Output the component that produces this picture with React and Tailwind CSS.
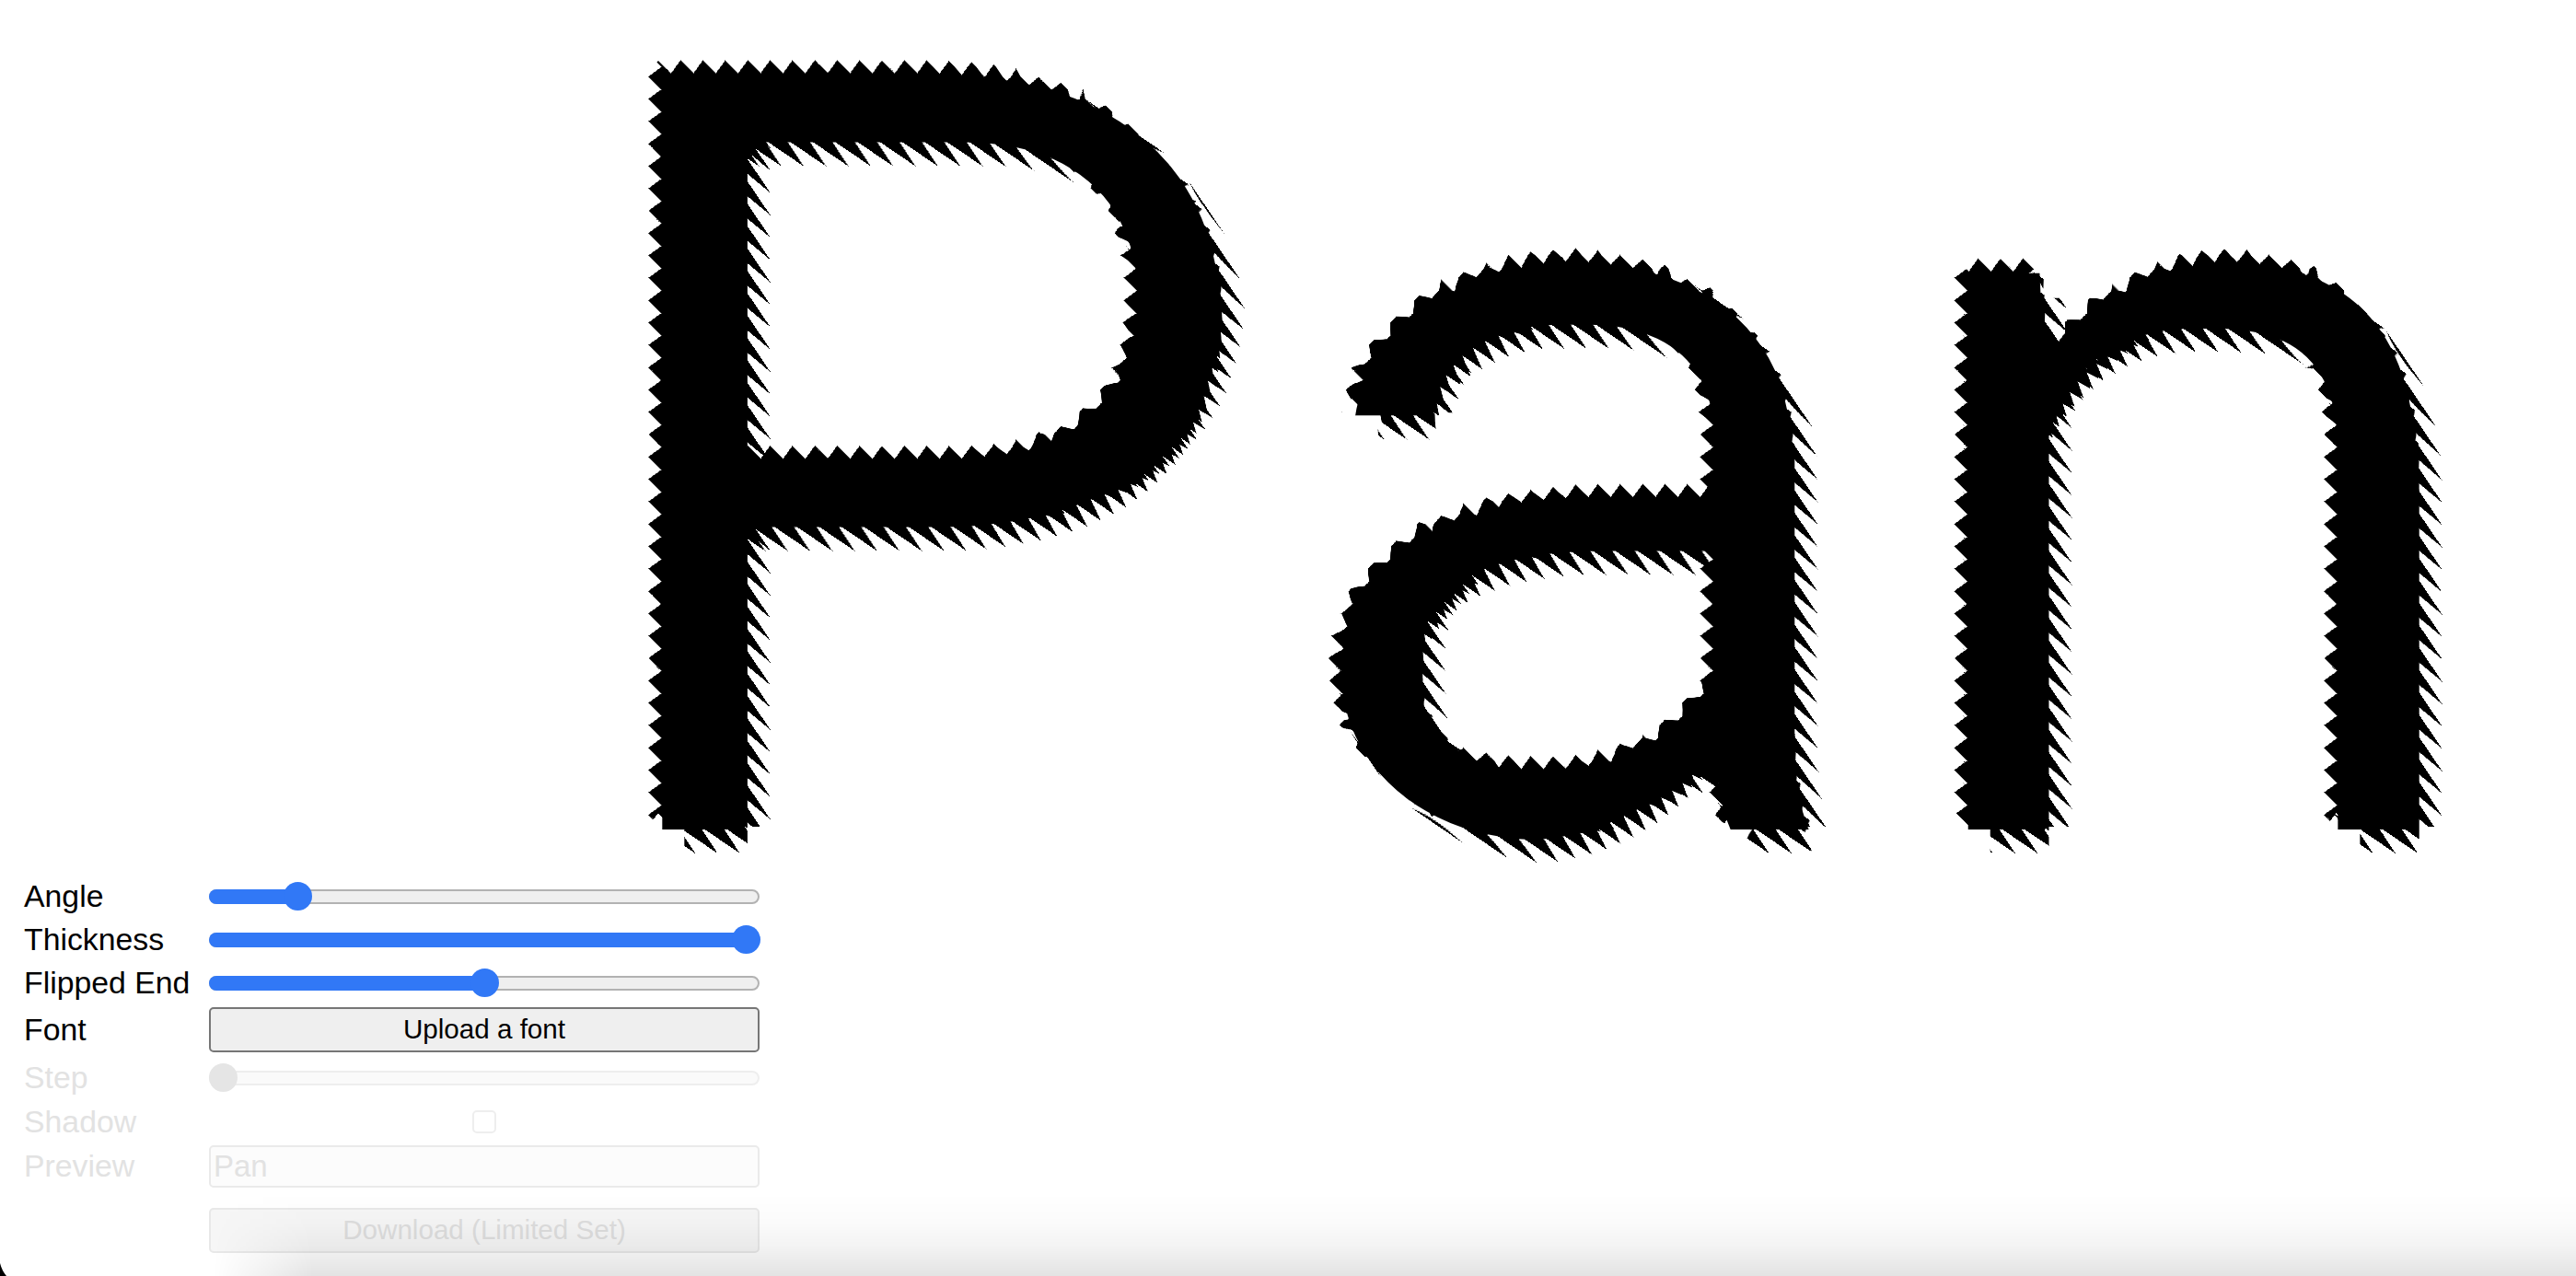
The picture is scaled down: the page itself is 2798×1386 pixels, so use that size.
import React from "react"

const font = { fontFamily: '"Liberation Sans", Arial, sans-serif' }
const wordFont = { fontFamily: 'Roboto, "Liberation Sans", sans-serif' }

// repeating ramps used as displacement maps for the serrated lettering
const gradientMap = (channel, x2, y2, stops) => {
  const stopTags = stops
    .map(([at, v]) => {
      const c = Math.round(v * 255)
      const color = channel === "r" ? `rgb(${c},0,0)` : `rgb(0,${c},0)`
      return `<stop offset='${at}' stop-color='${color}'/>`
    })
    .join("")
  const svg = `<svg xmlns='http://www.w3.org/2000/svg' width='2798' height='1000'><defs><linearGradient id='g' gradientUnits='userSpaceOnUse' spreadMethod='repeat' x1='0' y1='0' x2='${x2}' y2='${y2}'>${stopTags}</linearGradient></defs><rect width='2798' height='1000' fill='url(#g)'/></svg>`
  return `data:image/svg+xml,${encodeURIComponent(svg)}`
}

const ramp = [[0, 0], [1, 1]]
const wave = [[0, 0], [0.42, 1], [1, 0]]
const flat = [[0, 0.5], [1, 0.5]]
const period = 24.3
const lean = 1.47
const leanVec = (a, b) => [(period * a) / (a * a + b * b), (period * b) / (a * a + b * b)]
const [rx, ry] = leanVec(-lean, 1)
const [gx, gy] = leanVec(1, -lean)

function ToothMap({ name, red, green }) {
  return (
    <>
      <feImage href={red} x="0" y="0" width="2798" height="1000" preserveAspectRatio="none" result={`${name}R`} />
      <feImage href={green} x="0" y="0" width="2798" height="1000" preserveAspectRatio="none" result={`${name}G`} />
      <feBlend in={`${name}R`} in2={`${name}G`} mode="screen" result={name} />
    </>
  )
}

function Preview() {
  return (
    <svg className="block w-full h-[950px]" viewBox="0 0 2798 950">
      <defs>
        <filter id="serrate" filterUnits="userSpaceOnUse" x="0" y="0" width="2798" height="1000" colorInterpolationFilters="sRGB">
          <ToothMap name="mapFront" red={gradientMap("r", 0, period, wave)} green={gradientMap("g", period, 0, wave)} />
          <ToothMap name="mapX" red={gradientMap("r", rx, ry, ramp)} green={gradientMap("g", 10, 0, flat)} />
          <ToothMap name="mapY" red={gradientMap("r", 10, 0, flat)} green={gradientMap("g", gx, gy, ramp)} />

          <feMorphology in="SourceGraphic" operator="erode" radius="16 10" result="frontThin" />
          <feDisplacementMap in="frontThin" in2="mapFront" scale="14" xChannelSelector="R" yChannelSelector="G" result="front" />

          <feMorphology in="SourceGraphic" operator="erode" radius="14 9" result="coreThin" />
          <feOffset in="coreThin" dx="10" dy="10" result="core" />

          <feMorphology in="SourceGraphic" operator="erode" radius="16 24" result="sideThin" />
          <feOffset in="sideThin" dx="22" dy="22" result="sideMoved" />
          <feDisplacementMap in="sideMoved" in2="mapX" scale="38" xChannelSelector="R" yChannelSelector="G" result="side" />

          <feMorphology in="SourceGraphic" operator="erode" radius="24 10" result="underThin" />
          <feOffset in="underThin" dx="24" dy="22" result="underMoved" />
          <feDisplacementMap in="underMoved" in2="mapY" scale="30" xChannelSelector="R" yChannelSelector="G" result="under" />

          <feMerge>
            <feMergeNode in="front" />
            <feMergeNode in="core" />
            <feMergeNode in="side" />
            <feMergeNode in="under" />
          </feMerge>
        </filter>
      </defs>
      <g filter="url(#serrate)">
        <text x="565 1302 1932" y="900" transform="scale(1.05 1)" fontSize="1178" fill="#000" style={wordFont}>
          Pan
        </text>
      </g>
    </svg>
  )
}

function Slider({ value, disabled }) {
  if (disabled) {
    return (
      <div className="relative w-full h-4 rounded-full border-2 border-[#eeeeee] bg-[#fafafa]">
        <div className="absolute -left-[2px] -top-[10px] w-[31px] h-[31px] rounded-full bg-[#e5e5e5]" />
      </div>
    )
  }
  const center = 15 + (568 * value) / 100
  return (
    <div className="relative w-full h-4 rounded-full border-2 border-[#b2b2b2] bg-[#efefef]">
      <div className="absolute -left-[2px] -top-[2px] h-4 rounded-full bg-[#3178f6]" style={{ width: center }} />
      <div
        className="absolute -top-[10px] w-[31px] h-[31px] rounded-full bg-[#3178f6]"
        style={{ left: center - 17 }}
      />
    </div>
  )
}

function Row({ label, dim, className, children }) {
  return (
    <div className={`flex items-center ${className}`}>
      <label className={`w-[201px] shrink-0 text-[33.8px] leading-none ${dim ? "text-[#e2e2e2]" : "text-black"}`}>{label}</label>
      <div className="w-[598px] flex items-center justify-center">{children}</div>
    </div>
  )
}

export default function App() {
  return (
    <div className="relative h-[1386px] overflow-hidden bg-white" style={font}>
      <Preview />
      <div className="pl-[26px]">
        <Row label="Angle" className="h-[47px]">
          <Slider value={14.3} />
        </Row>
        <Row label="Thickness" className="h-[47px]">
          <Slider value={100} />
        </Row>
        <Row label="Flipped End" className="h-[47px]">
          <Slider value={50} />
        </Row>
        <Row label="Font" className="h-[55px]">
          <button className="w-full h-[49px] rounded-[5px] border-2 border-[#767676] bg-[#efefef] text-[29.6px] text-black">
            Upload a font
          </button>
        </Row>
        <Row label="Step" dim className="h-[49px]">
          <Slider disabled />
        </Row>
        <Row label="Shadow" dim className="h-[47px]">
          <div className="w-[26px] h-[25px] rounded-[5px] border-2 border-[#eeeeee] bg-white" />
        </Row>
        <Row label="Preview" dim className="h-[49px]">
          <input
            disabled
            value="Pan"
            readOnly
            className="w-full h-[46px] px-[3px] rounded-[5px] border-2 border-[#eaeaea] bg-[#fcfcfc] text-[33px] text-[#e2e2e2]"
          />
        </Row>
        <div className="pl-[201px] pt-[21px]">
          <button
            disabled
            className="w-[598px] h-[49px] rounded-[5px] border-2 border-[#e8e8e8] bg-[#f6f6f6] text-[29.6px] text-[#dedede]"
          >
            Download (Limited Set)
          </button>
        </div>
      </div>
      <div className="absolute inset-x-0 bottom-0 h-[90px] pointer-events-none bg-[linear-gradient(180deg,rgba(0,0,0,0)_0%,rgba(0,0,0,0.016)_35%,rgba(0,0,0,0.047)_65%,rgba(0,0,0,0.11)_100%)] [mask-image:linear-gradient(90deg,transparent_232px,black_340px)]" />
      <svg className="absolute left-0 bottom-0 w-[7px] h-[14px]" viewBox="0 0 7 14">
        <path d="M0 0 Q2 8 7 14 L0 14 Z" fill="#000" />
      </svg>
    </div>
  )
}
